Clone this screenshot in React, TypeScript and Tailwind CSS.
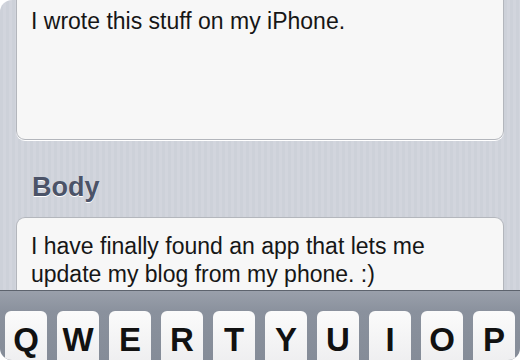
import React from 'react';

const keys = ['Q', 'W', 'E', 'R', 'T', 'Y', 'U', 'I', 'O', 'P'];

export default function App() {
  return (
    <div className="w-[520px] h-[360px] bg-white">
      <div
        className="w-full h-full flex flex-col overflow-hidden rounded-tl-[12px] rounded-bl-[12px] rounded-br-[12px] bg-[repeating-linear-gradient(90deg,#cdd1d9_0px,#cdd1d9_3px,#d2d5dd_3px,#d2d5dd_6px)]"
        style={{ fontFamily: '"Liberation Sans", Arial, sans-serif' }}
      >
        {/* title field, scrolled partly off the top */}
        <div className="mx-[16px] mt-[-20px] h-[160px] shrink-0 rounded-[9px] border border-[#b3b6bc] bg-[#f7f7f7] pt-[26px] px-[14px] shadow-[0_1px_0_#ffffff]">
          <p className="text-[23px] leading-[28px] text-[#161616]">I wrote this stuff on my iPhone.</p>
        </div>

        <h2 className="mt-[31px] ml-[32px] text-[27px] leading-[32px] font-bold text-[#4b5368] [text-shadow:0_1px_0_#ffffff]">
          Body
        </h2>

        {/* body field, runs under the keyboard */}
        <div className="mx-[16px] mt-[14px] flex-1 rounded-t-[9px] border border-b-0 border-[#b3b6bc] bg-[#f7f7f7] pt-[14px] px-[14px]">
          <p className="text-[23px] leading-[28px] text-[#161616]">
            I have finally found an app that lets me
            <br />
            update my blog from my phone. :)
          </p>
        </div>

        {/* keyboard */}
        <div className="h-[70px] shrink-0 border-t border-[#5d636d] bg-[linear-gradient(#9aa0ab,#8a919d_30%,#858c98)] pt-[20px] px-[5px] flex gap-[10px]">
          {keys.map((k) => (
            <div
              key={k}
              className="w-[42px] h-[60px] shrink-0 rounded-[6px] bg-[linear-gradient(#fbfbfb,#ececee)] shadow-[0_1px_0_#5f6570] pt-[12px] text-center text-[33px] leading-[33px] font-bold text-[#111111]"
            >
              {k}
            </div>
          ))}
        </div>
      </div>
    </div>
  );
}
